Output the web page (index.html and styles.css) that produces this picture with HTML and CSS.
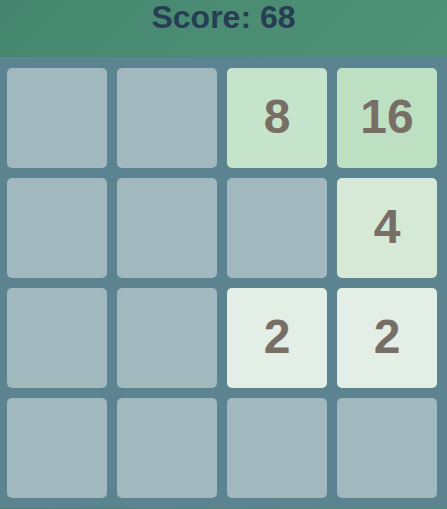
FILE: index.html
```html
<!DOCTYPE html>
<html lang="en">
<head>
  <meta charset="UTF-8">
  <meta name="viewport" content="width=device-width, initial-scale=1.0">
  <title>2048</title>
  <link rel="stylesheet" href="styles.css">
</head>
<body>
  <div class="header">
    <h1>Score: <span id="score">68</span></h1>
  </div>

  <div class="board" id="board"></div>

  <script>
    const board = document.getElementById('board');
    const grid = [
      [0, 0, 8, 16],
      [0, 0, 0, 4],
      [0, 0, 2, 2],
      [0, 0, 0, 0]
    ];

    grid.forEach(row => {
      row.forEach(value => {
        const tile = document.createElement('div');
        tile.classList.add('tile');
        if (value) {
          tile.classList.add(`tile-${value}`);
          tile.textContent = value;
        }
        board.appendChild(tile);
      });
    });
  </script>
</body>
</html>
```

FILE: styles.css
```css
* {
  margin: 0;
  padding: 0;
  box-sizing: border-box;
}

body {
  background: linear-gradient(135deg, #468670, #4f9176 50%, #45836e);
  font-family: 'Liberation Sans', Arial, sans-serif;
  overflow: hidden;
}

.header {
  height: 57px;
  text-align: center;
}

h1 {
  font-size: 32px;
  line-height: 35px;
  color: #263d52;
}

.board {
  display: grid;
  grid-template-columns: repeat(4, 100px);
  grid-auto-rows: 100px;
  gap: 10px;
  padding: 11px 10px 10px;
  width: 450px;
  margin-left: -3px;
  background-color: #5b8490;
}

.tile {
  border-radius: 5px;
  background-color: #a2b8bf;
  color: #776e65;
  font-size: 48px;
  font-weight: bold;
  display: flex;
  justify-content: center;
  align-items: center;
  padding-bottom: 4px;
}

.tile-2 {
  background-color: #e3efe6;
}

.tile-4 {
  background-color: #d6e8d6;
}

.tile-8 {
  background-color: #c6e4cb;
}

.tile-16 {
  background-color: #bde0c3;
}
```
